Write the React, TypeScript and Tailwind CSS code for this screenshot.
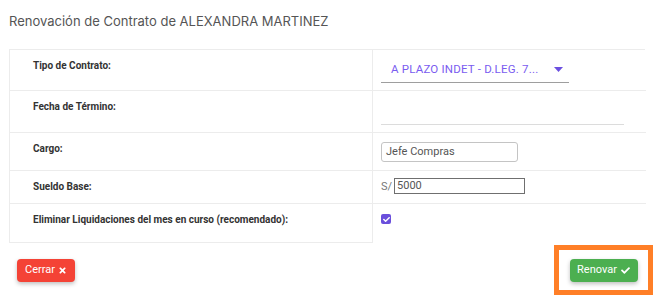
import { FaTimes, FaCheck } from "react-icons/fa";

const Label = ({ children }: { children: React.ReactNode }) => (
  <div className="pl-[23px] pt-[10px] text-[10px] leading-[12px] font-bold text-[#333]">{children}</div>
);

export default function App() {
  return (
    <div className="w-[662px] h-[305px] bg-white overflow-hidden font-['Roboto',sans-serif]">
      <div className="pl-[9px] pt-[13px] h-[49px] text-[13px] leading-[16px] text-[#555] font-['Inter',sans-serif]">
        Renovación de Contrato de ALEXANDRA MARTINEZ
      </div>

      <div className="ml-[9px] w-[636px] border-l border-t border-[#ececec] grid grid-cols-[363px_273px]">
        {/* Tipo de contrato */}
        <div className="h-[41px] border-b border-r border-[#ececec]">
          <Label>Tipo de Contrato:</Label>
        </div>
        <div className="h-[41px] border-b border-[#ececec] pl-[8px] pt-[8px]">
          <div className="w-[188px] h-[25px] border-b-[1.5px] border-[#9e9e9e] flex items-center justify-between pl-[10px] pr-[6px]">
            <span className="text-[11.5px] text-[#7a5cf0] tracking-[0.2px]">A PLAZO INDET - D.LEG. 7...</span>
            <svg width="9" height="5" viewBox="0 0 9 5" className="mb-[2px]">
              <path d="M0 0 L9 0 L4.5 5 Z" fill="#6b4fe0" />
            </svg>
          </div>
        </div>

        {/* Fecha */}
        <div className="h-[42px] border-b border-r border-[#ececec]">
          <Label>Fecha de Término:</Label>
        </div>
        <div className="h-[42px] border-b border-[#ececec] pl-[8px] pt-[33px]">
          <div className="w-[243px] border-b border-[#dcdcdc]" />
        </div>

        {/* Cargo */}
        <div className="h-[38px] border-b border-r border-[#ececec]">
          <Label>Cargo:</Label>
        </div>
        <div className="h-[38px] border-b border-[#ececec] pl-[8px] pt-[9px]">
          <div className="w-[137px] h-[20px] border border-[#c4c4c4] rounded-[3px] flex items-center pl-[4px] text-[11px] text-[#555]">
            Jefe Compras
          </div>
        </div>

        {/* Sueldo */}
        <div className="h-[33px] border-b border-r border-[#ececec]">
          <Label>Sueldo Base:</Label>
        </div>
        <div className="h-[33px] border-b border-[#ececec] pl-[8px] pt-[7px] flex items-start gap-[2px]">
          <span className="text-[11px] leading-[17px] text-[#777]">S/</span>
          <div className="w-[131px] h-[16px] border border-[#6f6f6f] flex items-center pl-[2px] text-[11px] text-[#555]">
            5000
          </div>
        </div>

        {/* Eliminar */}
        <div className="h-[39px] border-b border-r border-[#ececec]">
          <Label>Eliminar Liquidaciones del mes en curso (recomendado):</Label>
        </div>
        <div className="h-[39px] pl-[8px] pt-[10px]">
          <div className="w-[10px] h-[10px] rounded-[2px] bg-[#6a4fdc] flex items-center justify-center">
            <FaCheck className="text-white w-[7px] h-[7px]" />
          </div>
        </div>
      </div>

      <div className="flex justify-between items-start pl-[17px] pr-[9px] pt-[2px]">
        <button className="mt-[14px] w-[58px] h-[23px] rounded-[4px] bg-[#f44336] text-white text-[11px] flex items-center justify-center gap-[3px] shadow-[0_2px_4px_rgba(0,0,0,0.25)]">
          Cerrar <FaTimes className="w-[9px] h-[9px]" />
        </button>
        <div className="w-[99px] h-[50px] border-[5px] border-[#ff7f27] flex items-center justify-center">
          <button className="w-[68px] h-[23px] rounded-[4px] bg-[#4caf50] text-white text-[11px] flex items-center justify-center gap-[4px] shadow-[0_2px_4px_rgba(0,0,0,0.25)]">
            Renovar <FaCheck className="w-[9px] h-[9px]" />
          </button>
        </div>
      </div>
    </div>
  );
}
